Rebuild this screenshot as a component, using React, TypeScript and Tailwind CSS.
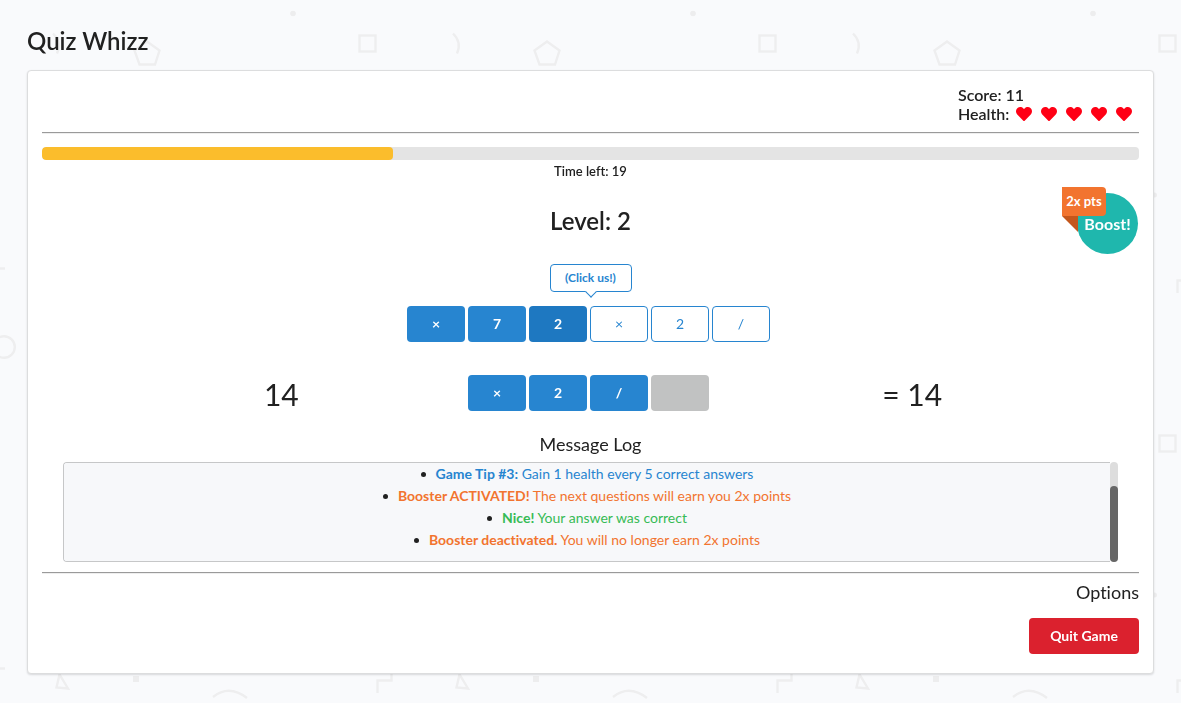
import React, { useEffect, useRef } from "react";
import { FaHeart } from "react-icons/fa";

type TileState = "used" | "focused" | "open";

const tiles: { label: string; state: TileState }[] = [
  { label: "×", state: "used" },
  { label: "7", state: "used" },
  { label: "2", state: "focused" },
  { label: "×", state: "open" },
  { label: "2", state: "open" },
  { label: "/", state: "open" },
];

const answer = ["×", "2", "/"];

const messages = [
  { title: "Game Tip #3:", text: "Gain 1 health every 5 correct answers", color: "text-[#2785d0]" },
  { title: "Booster ACTIVATED!", text: "The next questions will earn you 2x points", color: "text-[#f2742f]" },
  { title: "Nice!", text: "Your answer was correct", color: "text-[#36bb55]" },
  { title: "Booster deactivated.", text: "You will no longer earn 2x points", color: "text-[#f2742f]" },
];

const tileBase = "flex h-9 w-[58px] items-center justify-center rounded text-sm";
const tileStyles: Record<TileState, string> = {
  used: "bg-[#2785d0] font-bold text-white",
  focused: "bg-[#1e78c1] font-bold text-white",
  open: "border border-[#2785d0] bg-white text-[#2785d0]",
};

function Backdrop() {
  return (
    <svg className="fixed inset-0 -z-10 h-full w-full" aria-hidden="true">
      <defs>
        <pattern id="shapes" width="400" height="400" patternUnits="userSpaceOnUse">
          <g fill="none" stroke="#eeeeef" strokeWidth="2.4">
            <rect x="359.5" y="35.5" width="16" height="16" />
            <path d="M53 33.5Q62 42 57 53.5" />
            <path d="M147 41.5L159.5 50.5L155 64.5H139.5L134.5 50.5Z" />
            <path d="M-5 268.5H5" />
            <circle cx="4" cy="347" r="10.8" />
            <path d="M377.5 293V280.5H391.5V273" />
            <path d="M59.5 274.5L56.5 287.5L68 288.5Z" />
            <path d="M213 297Q229 284 247 298" />
          </g>
          <g fill="#ededee">
            <circle cx="293" cy="13.5" r="2.8" />
            <rect x="133" y="276" width="6" height="6" />
            <circle cx="354.5" cy="195" r="2.5" />
          </g>
        </pattern>
      </defs>
      <rect width="100%" height="100%" fill="#f9fafc" />
      <rect width="100%" height="100%" fill="url(#shapes)" />
    </svg>
  );
}

function Divider() {
  return <hr className="h-0.5 border-t border-b border-t-[#9a9a9a] border-b-[#eeeeee]" />;
}

function MessageLog() {
  const log = useRef<HTMLUListElement>(null);
  useEffect(() => {
    if (log.current) log.current.scrollTop = log.current.scrollHeight;
  }, []);
  return (
    <section className="mt-5 px-[21px] text-center">
      <h3 className="text-lg leading-[22px]">Message Log</h3>
      <div className="mt-[7px] mb-2.5 flex h-[100px]">
        <ul
          ref={log}
          className="flex-1 overflow-y-scroll rounded-l border-y border-l border-[#c6c7c8] bg-[#f7f8fa] pt-8 pb-2.5 text-sm leading-[22px] [scrollbar-width:none]"
        >
          {messages.map((m) => (
            <li key={m.title} className="flex items-center justify-center gap-2.5">
              <span className="size-[5px] rounded-full bg-[#212121]" />
              <span className={m.color}>
                <b className="font-bold">{m.title}</b> {m.text}
              </span>
            </li>
          ))}
        </ul>
        <div className="flex w-2 items-end rounded bg-[#dddddd]" aria-hidden="true">
          <div className="h-[76px] w-full rounded bg-[#666666]" />
        </div>
      </div>
    </section>
  );
}

export default function App() {
  return (
    <main className="relative isolate px-[27px] pt-[26px] pb-7 font-['Lato',sans-serif] text-sm text-[#212121] [font-variant-ligatures:none]">
      <Backdrop />
      <h1 className="mb-3.5 text-2xl leading-[30px] font-semibold">Quiz Whizz</h1>

      <div className="rounded border border-[#dcddde] bg-white px-3.5 pt-3.5 pb-[19px] shadow-[0_1px_2px_rgba(34,36,38,0.15)]">
        <header className="mb-[9px] flex justify-end">
          <div className="w-[181px] text-base leading-[19px] font-semibold">
            <p>Score: 11</p>
            <div className="flex items-center gap-[7px]">
              <span>Health:</span>
              <span className="flex gap-[9px] text-[#ff0015]">
                {[1, 2, 3, 4, 5].map((n) => (
                  <FaHeart key={n} className="size-4" />
                ))}
              </span>
            </div>
          </div>
        </header>
        <Divider />

        <div className="mt-[13px] h-[13px] overflow-hidden rounded bg-[#e4e4e4]">
          <div className="h-full rounded bg-[#fbbd2c]" style={{ width: "32%" }} />
        </div>
        <p className="mt-0.5 text-center text-[13px] leading-[18px] font-semibold">Time left: 19</p>

        <div className="relative mt-[26px]">
          <h2 className="text-center text-2xl leading-[30px] font-semibold">Level: 2</h2>
          <div className="absolute -top-[13px] right-px">
            <button
              type="button"
              className="flex size-[61px] items-center justify-center rounded-full bg-[#1fb7ad] text-base font-bold text-white"
            >
              Boost!
            </button>
            <span className="absolute -top-1.5 -left-[15px] flex h-[29px] w-11 items-center justify-center rounded rounded-l-none bg-[#f2742f] text-[13px] font-bold whitespace-nowrap text-white">
              2x pts
            </span>
            <span className="absolute top-[23px] -left-[15px] size-4 bg-[#c4571c] [clip-path:polygon(0_0,100%_0,100%_100%)]" />
          </div>
        </div>

        <div className="mt-7 flex justify-center">
          <div className="relative flex h-7 w-[82px] items-center justify-center rounded border border-[#2785d0] bg-white text-xs font-bold text-[#2785d0]">
            (Click us!)
            <span className="absolute -bottom-[5px] left-1/2 size-2 -translate-x-1/2 rotate-45 border-r border-b border-[#2785d0] bg-white" />
          </div>
        </div>

        <div className="mt-3.5 flex justify-center gap-[3px] pr-1">
          {tiles.map((t, i) => (
            <button key={i} type="button" className={`${tileBase} ${tileStyles[t.state]}`}>
              {t.label}
            </button>
          ))}
        </div>

        <div className="mt-[33px] grid grid-cols-[11fr_25fr_11fr] items-start">
          <p className="text-right text-3xl leading-[38px]">14</p>
          <div className="flex justify-center gap-[3px] pr-1">
            {answer.map((a) => (
              <button key={a} type="button" className={`${tileBase} ${tileStyles.used}`}>
                {a}
              </button>
            ))}
            <button type="button" disabled aria-label="Empty slot" className={`${tileBase} bg-[#c1c2c2]`} />
          </div>
          <p className="text-left text-3xl leading-[38px]">= 14</p>
        </div>

        <MessageLog />
        <Divider />

        <footer className="mt-[7px] flex flex-col items-end gap-[15px]">
          <h3 className="text-lg leading-[22px]">Options</h3>
          <button type="button" className="h-9 w-[110px] rounded bg-[#db212e] text-sm font-bold text-white">
            Quit Game
          </button>
        </footer>
      </div>
    </main>
  );
}
